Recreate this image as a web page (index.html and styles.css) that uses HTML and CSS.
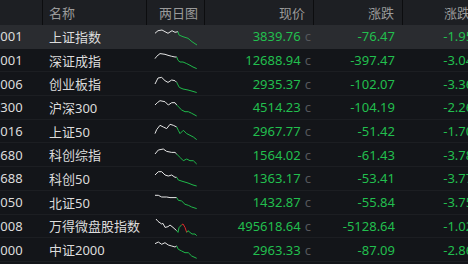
FILE: index.html
```html
<!DOCTYPE html>
<html lang="zh-CN">
<head>
    <meta charset="UTF-8">
    <title>指数行情</title>
    <link rel="stylesheet" href="styles.css">
</head>
<body>
<div class="quote-table">
    <div class="row head">
        <div class="cell code"></div>
        <div class="cell name">名称</div>
        <div class="cell chart">两日图</div>
        <div class="cell num">现价</div>
        <div class="cell num">涨跌</div>
        <div class="cell num">涨跌幅</div>
    </div>

    <div class="row active">
        <div class="cell code">000001</div>
        <div class="cell name">上证指数</div>
        <div class="cell chart"><svg viewBox="154 0 44 22" width="44" height="22"><polyline class="w" points="155,8.3 158,5.7 162,5 165,6.7 168,8.3 172,5.7 175,7.3 178,6.7"/><polyline class="g" points="178,6.7 179,10 183,11.7 188,13.3 192,16.7 197,20"/></svg></div>
        <div class="cell num price"><span>3839.76</span><i>c</i></div>
        <div class="cell num down">-76.47</div>
        <div class="cell num down">-1.95%</div>
    </div>

    <div class="row">
        <div class="cell code">399001</div>
        <div class="cell name">深证成指</div>
        <div class="cell chart"><svg viewBox="154 0 44 22" width="44" height="22"><polyline class="w" points="155,9.6 156.7,7.3 160,4.6 165,5.3 168,6.3 171.7,7.3 175,8 176.7,8"/><polyline class="g" points="176.7,8 178,11.3 180,13 183,13 186.7,14.6 190,16.3 193,18 196.7,19.6"/></svg></div>
        <div class="cell num price"><span>12688.94</span><i>c</i></div>
        <div class="cell num down">-397.47</div>
        <div class="cell num down">-3.04%</div>
    </div>

    <div class="row">
        <div class="cell code">399006</div>
        <div class="cell name">创业板指</div>
        <div class="cell chart"><svg viewBox="154 0 44 22" width="44" height="22"><polyline class="w" points="155,11 158,5 161.7,4.4 165,7.7 168,9.4 171.7,7 175,7.7 176.7,9.4"/><polyline class="g" points="176.7,9.4 179.3,14.4 183,16 188,17 193,18.4 196.7,19.5"/></svg></div>
        <div class="cell num price"><span>2935.37</span><i>c</i></div>
        <div class="cell num down">-102.07</div>
        <div class="cell num down">-3.36%</div>
    </div>

    <div class="row">
        <div class="cell code">000300</div>
        <div class="cell name">沪深300</div>
        <div class="cell chart"><svg viewBox="154 0 44 22" width="44" height="22"><polyline class="w" points="155,9 157.3,6.7 160,4.7 165,5.7 168.3,9 171.7,6.7 175,6.7 176.7,9"/><polyline class="g" points="176.7,9 178.3,10.7 181.7,14 185,15.7 188.3,15.7 191.7,17.3 196.7,20"/></svg></div>
        <div class="cell num price"><span>4514.23</span><i>c</i></div>
        <div class="cell num down">-104.19</div>
        <div class="cell num down">-2.26%</div>
    </div>

    <div class="row">
        <div class="cell code">000016</div>
        <div class="cell name">上证50</div>
        <div class="cell chart"><svg viewBox="154 0 44 22" width="44" height="22"><polyline class="w" points="155,13.6 156.7,9.6 160,5.3 163.3,7 166.7,8.6 170,4.3 173.3,5.3 176.7,7"/><polyline class="g" points="176.7,7 178.3,10.3 180,13.6 183.3,10.3 186.7,13.6 190,15.3 193.3,17 196.7,19.6"/></svg></div>
        <div class="cell num price"><span>2967.77</span><i>c</i></div>
        <div class="cell num down">-51.42</div>
        <div class="cell num down">-1.70%</div>
    </div>

    <div class="row">
        <div class="cell code">000680</div>
        <div class="cell name">科创综指</div>
        <div class="cell chart"><svg viewBox="154 0 44 22" width="44" height="22"><polyline class="w" points="155,10 158.3,6 163.3,5 166.7,7.4 171.7,8.4 175,8.4 176.7,10"/><polyline class="g" points="176.7,10 180,13.4 183.3,16.7 186.7,15 190,16.7 193.3,16.7 196.7,20"/></svg></div>
        <div class="cell num price"><span>1564.02</span><i>c</i></div>
        <div class="cell num down">-61.43</div>
        <div class="cell num down">-3.78%</div>
    </div>

    <div class="row">
        <div class="cell code">000688</div>
        <div class="cell name">科创50</div>
        <div class="cell chart"><svg viewBox="154 0 44 22" width="44" height="22"><polyline class="w" points="155,8 158.3,4.7 161.7,4.7 165,8 168.3,9 171.7,8 175,10.3 176.7,10.3"/><polyline class="g" points="176.7,10.3 178.3,13 183,14.5 188,16 193,18 196.7,19"/></svg></div>
        <div class="cell num price"><span>1363.17</span><i>c</i></div>
        <div class="cell num down">-53.41</div>
        <div class="cell num down">-3.77%</div>
    </div>

    <div class="row">
        <div class="cell code">899050</div>
        <div class="cell name">北证50</div>
        <div class="cell chart"><svg viewBox="154 0 44 22" width="44" height="22"><polyline class="w" points="155,4.3 158.3,4.3 161.7,6 166.7,6 170,6.6 176.7,6.6"/><polyline class="g" points="176.7,6.6 178.3,9.3 181.7,10 185,13.3 188.3,14.3 191.7,16 196.7,17.6"/></svg></div>
        <div class="cell num price"><span>1432.87</span><i>c</i></div>
        <div class="cell num down">-55.84</div>
        <div class="cell num down">-3.75%</div>
    </div>

    <div class="row">
        <div class="cell code">868008</div>
        <div class="cell name">万得微盘股指数</div>
        <div class="cell chart"><svg viewBox="154 0 44 22" width="44" height="22"><polyline class="w" points="156,4 158,6.4 161.7,9 163,8.4 165,12.4 168,11.7 170,10 173,12.4 176.7,15.7"/><polyline class="g" points="176.7,15.7 178,17.4 179,12.7 181.7,9.7"/><polyline class="r" points="181.7,9.7 183,9 185,12.4 186.7,17.4"/><polyline class="g" points="186.7,17.4 188,15.7 190,17.4 192,19 195,19 196.7,20.7"/></svg></div>
        <div class="cell num price"><span>495618.64</span><i>c</i></div>
        <div class="cell num down">-5128.64</div>
        <div class="cell num down">-1.02%</div>
    </div>

    <div class="row">
        <div class="cell code">932000</div>
        <div class="cell name">中证2000</div>
        <div class="cell chart"><svg viewBox="154 0 44 22" width="44" height="22"><polyline class="w" points="155,4.7 158.3,3 161.7,5.3 165,3.7 168.3,6 171.7,7 175,8 176.7,7"/><polyline class="g" points="176.7,7 178.3,10.3 181.7,12 185,13.7 188.3,13.7 191.7,17 196.7,19.3"/></svg></div>
        <div class="cell num price"><span>2963.33</span><i>c</i></div>
        <div class="cell num down">-87.09</div>
        <div class="cell num down">-2.86%</div>
    </div>
</div>
</body>
</html>
```

FILE: styles.css
```css
body {
    margin: 0;
    background-color: #131519;
    font-family: "Noto Sans", "Noto Sans CJK SC", sans-serif;
    font-size: 13px;
    color: #dcdcdc;
    overflow: hidden;
}
.quote-table {
    width: 522px;
    margin-left: -30px;
}
.row {
    display: grid;
    grid-template-columns: 73px 104px 58px 109px 89px 89px;
    height: 23.7px;
    border-bottom: 1px solid #1c1e22;
    box-sizing: border-box;
    align-items: center;
}
.row.head {
    height: 25px;
    background-color: #1d1f23;
    border-bottom: none;
    color: #9a9a9a;
}
.row.head .cell {
    height: 100%;
    display: flex;
    align-items: center;
    border-right: 1px solid #0c0d0f;
    box-sizing: border-box;
}
.row.head .cell.num {
    justify-content: flex-end;
}
.row.head .cell.chart {
    justify-content: center;
    padding-left: 6px;
}
.row.active {
    background-color: #2a2c30;
    border-bottom-color: #2a2c30;
}
.cell {
    white-space: nowrap;
    overflow: hidden;
}
.cell.code {
    padding-left: 8px;
}
.cell.name {
    padding-left: 6px;
}
.cell.chart {
    padding-left: 7px;
    height: 22px;
}
.cell.chart svg {
    display: block;
}
.cell.num {
    text-align: right;
    padding-right: 8px;
}
.cell.price {
    display: flex;
    justify-content: flex-end;
    align-items: center;
    gap: 4px;
    padding-right: 3px;
    color: #22bf4e;
}
.cell.price i {
    font-style: normal;
    color: #55575b;
}
.down {
    color: #22bf4e;
}
polyline {
    fill: none;
    stroke-width: 1;
    stroke-linejoin: round;
}
polyline.w {
    stroke: #e6e6e6;
}
polyline.g {
    stroke: #1fb84a;
}
polyline.r {
    stroke: #e02a2a;
}
```
